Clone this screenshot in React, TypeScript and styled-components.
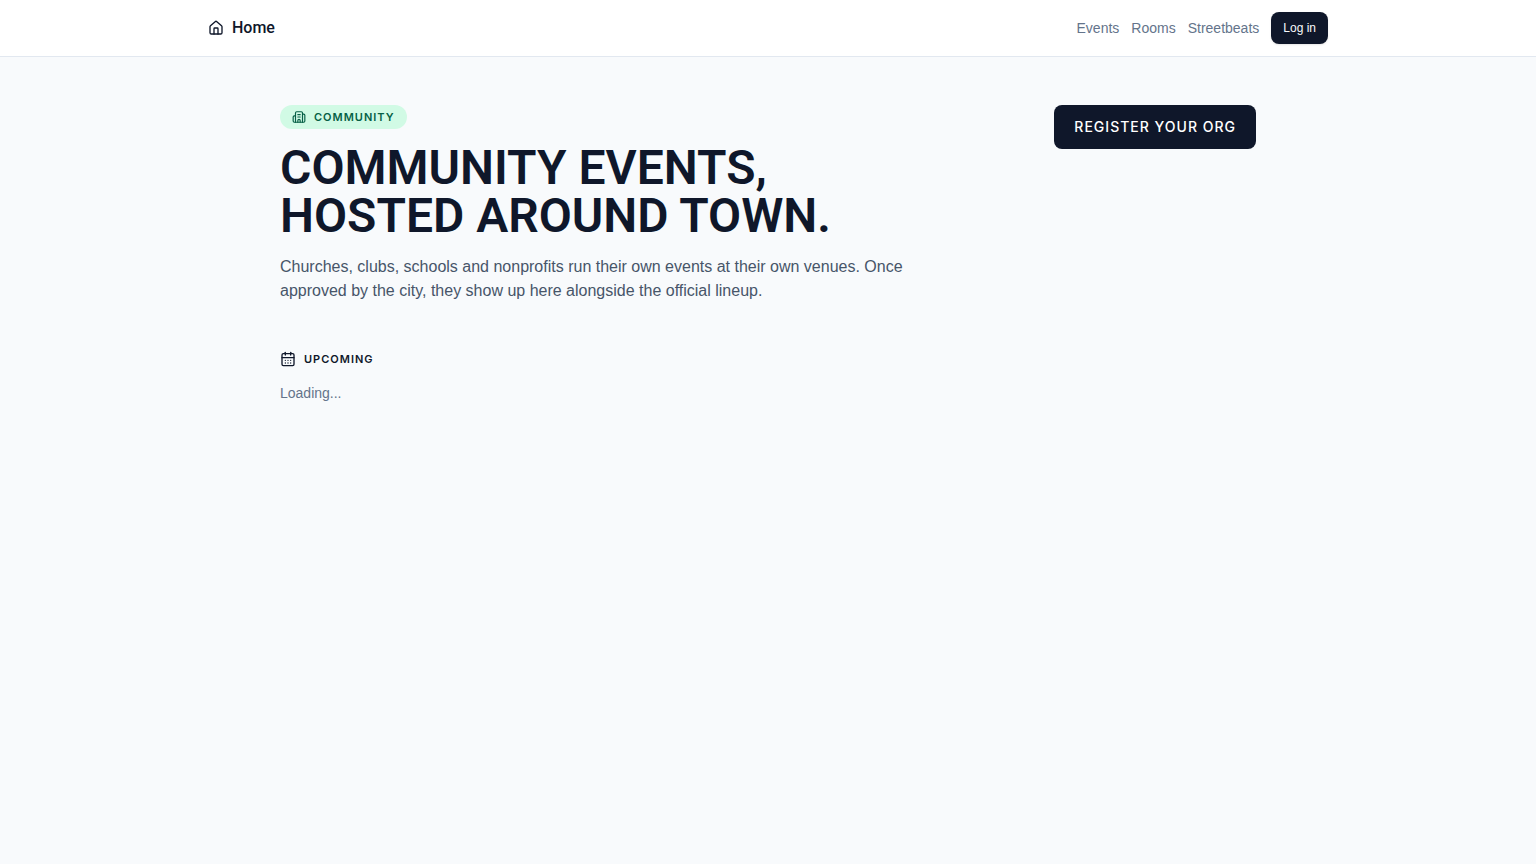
import React from "react";
import styled, { createGlobalStyle } from "styled-components";
import { Building2, CalendarDays, House } from "lucide-react";

const ink = "#0f172a";
const bodyFont = '"Liberation Sans", Arial, sans-serif';
const displayFont = 'Inter, "Liberation Sans", sans-serif';

const GlobalStyle = createGlobalStyle`
  *, *::before, *::after { box-sizing: border-box; }
  body {
    margin: 0;
    min-height: 100vh;
    background: #f8fafc;
    color: ${ink};
    font-family: ${bodyFont};
    font-size: 16px;
    line-height: 24px;
  }
  h1, h2, p { margin: 0; }
  a { color: inherit; text-decoration: none; }
  svg { flex-shrink: 0; }
`;

const Header = styled.header`
  background: #fff;
  border-bottom: 1px solid #e2e8f0;
`;

const HeaderInner = styled.div`
  display: flex;
  align-items: center;
  justify-content: space-between;
  max-width: 1152px;
  margin: 0 auto;
  padding: 12px 16px;
`;

const HomeLink = styled.a`
  display: inline-flex;
  align-items: center;
  gap: 8px;
  font-family: Roboto, sans-serif;
  font-weight: 500;
`;

const Nav = styled.nav`
  display: flex;
  align-items: center;
  gap: 12px;
`;

const NavLink = styled.a`
  color: #64748b;
  font-size: 14px;
  line-height: 20px;
`;

const LoginButton = styled.button`
  height: 32px;
  padding: 0 12px;
  border: 0;
  border-radius: 8px;
  background: ${ink};
  color: #f8fafc;
  font: 12px/16px ${bodyFont};
  box-shadow: 0 1px 2px rgba(0, 0, 0, 0.1);
  cursor: pointer;
`;

const Main = styled.main`
  max-width: 1024px;
  margin: 0 auto;
  padding: 48px 24px;
`;

const Hero = styled.section`
  display: flex;
  flex-wrap: wrap;
  align-items: flex-start;
  justify-content: space-between;
  gap: 24px;
`;

const Intro = styled.div`
  display: flex;
  flex-direction: column;
  align-items: flex-start;
  gap: 15px;
  max-width: 672px;
`;

const Badge = styled.span`
  display: inline-flex;
  align-items: center;
  gap: 8px;
  padding: 4px 12px;
  border-radius: 999px;
  background: #d1fae5;
  color: #065f46;
  font: 600 11px/16px ${displayFont};
  letter-spacing: 1px;
  text-transform: uppercase;
`;

const Title = styled.h1`
  font: 600 48px/48px Roboto, sans-serif;
  text-transform: uppercase;
`;

const Lead = styled.p`
  color: #475569;
`;

const RegisterLink = styled.a`
  display: inline-flex;
  align-items: center;
  height: 44px;
  padding: 0 20px;
  border-radius: 8px;
  background: ${ink};
  color: #fff;
  font: 500 14px/20px ${displayFont};
  letter-spacing: 1px;
  text-transform: uppercase;
`;

const Upcoming = styled.section`
  margin-top: 48px;
`;

const SectionTitle = styled.h2`
  display: flex;
  align-items: center;
  gap: 8px;
  font: 600 11px/16px ${displayFont};
  letter-spacing: 1px;
  text-transform: uppercase;
`;

const Status = styled.p`
  margin-top: 16px;
  color: #64748b;
  font-size: 14px;
  line-height: 20px;
`;

export default function App() {
  return (
    <>
      <GlobalStyle />
      <Header>
        <HeaderInner>
          <HomeLink href="#home">
            <House size={16} aria-hidden />
            Home
          </HomeLink>
          <Nav aria-label="Main">
            <NavLink href="#events">Events</NavLink>
            <NavLink href="#rooms">Rooms</NavLink>
            <NavLink href="#streetbeats">Streetbeats</NavLink>
            <LoginButton type="button">Log in</LoginButton>
          </Nav>
        </HeaderInner>
      </Header>
      <Main>
        <Hero>
          <Intro>
            <Badge>
              <Building2 size={14} aria-hidden />
              Community
            </Badge>
            <Title>
              Community events,
              <br />
              hosted around town.
            </Title>
            <Lead>
              Churches, clubs, schools and nonprofits run their own events at their own venues. Once
              approved by the city, they show up here alongside the official lineup.
            </Lead>
          </Intro>
          <RegisterLink href="#register">Register your org</RegisterLink>
        </Hero>
        <Upcoming>
          <SectionTitle>
            <CalendarDays size={16} aria-hidden />
            Upcoming
          </SectionTitle>
          <Status role="status">Loading...</Status>
        </Upcoming>
      </Main>
    </>
  );
}
